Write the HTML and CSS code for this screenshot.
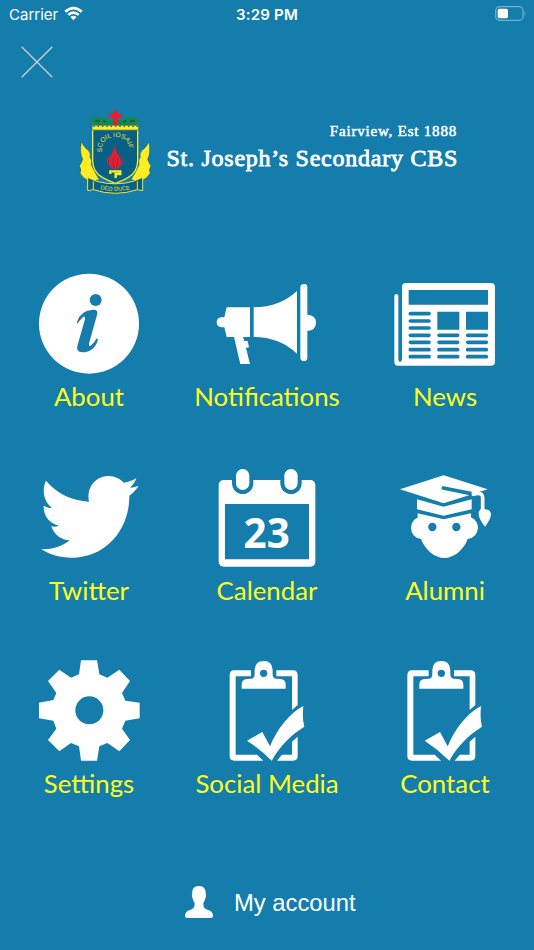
FILE: index.html
```html
<!DOCTYPE html>
<html lang="en">
<head>
  <meta charset="UTF-8">
  <meta name="viewport" content="width=device-width, initial-scale=1.0">
  <title>St. Joseph's Secondary CBS</title>
  <link rel="stylesheet" href="styles.css">
</head>
<body>
  <div class="status-bar">
    <div class="carrier">
      <span>Carrier</span>
      <svg class="wifi" viewBox="0 0 20 15">
        <path d="M.4 4.600Q10-3.800 19.600 4.600L17.700 6.600Q10-.2 2.300 6.600z"/>
        <path d="M3.600 7.900Q10 2.500 16.400 7.900L14.500 9.900Q10 6.300 5.500 9.900z"/>
        <path d="M6.800 11.100Q10 8.600 13.200 11.100L10 14.500z"/>
      </svg>
    </div>
    <span class="time">3:29 PM</span>
    <svg class="battery" viewBox="0 0 32 15">
      <rect class="battery-case" x=".7" y=".7" width="27.300" height="13.600" rx="3.800"/>
      <rect x="2.700" y="2.700" width="10.300" height="9.600" rx="1.800"/>
      <path class="battery-tip" d="M29.500 5Q31.500 7.500 29.500 10z"/>
    </svg>
  </div>

  <svg class="close" viewBox="0 0 32 32"><path d="M.7.700 31.300 31.300M31.300.700.700 31.300"/></svg>

  <header class="school">
    <svg class="crest" viewBox="0 0 270 285">
      <path class="green" d="M59 47Q66 36 78 39Q91 28 101 40Q113 36 119 48L134 42 149 48Q157 36 168 40Q180 28 190 39Q204 35 211 48L200 53 196 62H74L70 53z"/>
      <path class="leaf" d="M76 50l8-4 5 5M100 47l8 4M160 51l8-4M181 51l6-5 8 4"/>
      <path class="red" d="M130 17h13v10h13v11h-13v26h-13V38h-13V27h13z"/>
      <path class="gold" d="M34 110Q43 128 55 136Q64 147 60 157Q67 163 64 180Q74 202 88 224L61 230Q40 222 30 204Q36 195 28 183Q35 173 38 163Q28 143 34 110zM237 110Q228 128 216 136Q207 147 211 157Q204 163 207 180Q197 202 183 224L210 230Q231 222 241 204Q235 195 243 183Q236 173 233 163Q243 143 237 110z"/>
      <path class="shield" d="M68 74H203V166Q203 202 174 218Q150 231 136 235Q120 230 98 218Q68 202 68 166z"/>
      <path class="gold" d="M66 61H206V75H66z"/>
      <path class="battlement" d="M70 64H204"/>
      <path class="red" d="M135 116Q131 137 124 149Q112 163 118 182Q125 192 137 192Q154 187 155 173Q154 159 145 149Q135 138 135 116zM119 150Q110 169 115 182Q105 166 119 150zM152 150Q162 165 156 182Q166 166 152 150z"/>
      <path class="flame-line" d="M134 151Q125 171 132 189M142 159Q147 174 139 188"/>
      <path class="torch" d="M121 207V199H151V207H137V219"/>
      <path class="ribbon" d="M53 217L80 229Q136 244 190 229L218 217V257L202 254Q137 276 70 254L53 257zM70 229V254M202 229V254"/>
      <path id="motto-top" class="guide" d="M96 142Q91 98 137 96Q181 98 176 143"/>
      <text class="crest-text"><textPath href="#motto-top">SCOIL IOSAIF</textPath></text>
      <path id="motto-bottom" class="guide" d="M91 253Q137 262 184 253"/>
      <text class="crest-text motto"><textPath href="#motto-bottom">DEO DUCE</textPath></text>
    </svg>
    <div class="school-name">
      <p>Fairview, Est 1888</p>
      <h1>St. Joseph’s Secondary CBS</h1>
    </div>
  </header>

  <nav class="menu">
    <a class="item">
      <svg viewBox="27 27 300 300">
        <circle cx="177" cy="176" r="150"/>
        <circle class="cut" cx="197" cy="105" r="18"/>
        <path class="cut" d="M141 170Q152 138 185 135Q207 132 201 150L178 232Q174 248 184 241Q195 231 200 220L204 224Q193 261 157 262Q136 261 143 239L165 163Q167 149 157 158Q149 165 142 177z"/>
      </svg>
      <span>About</span>
    </a>
    <a class="item">
      <svg viewBox="81 27 300 300">
        <path d="M110 127H180V216H110L103 187H94Q80 186 80 172Q80 158 94 157H103z"/>
        <path d="M132 216H159L163 228H173L177 247 168 249 180 297H151z"/>
        <path d="M191 127Q268 127 321 78V266Q268 216 191 216z"/>
        <path d="M331 67Q332 57 342 57Q352 57 352 67V149Q378 151 378 173Q378 195 352 198V278Q352 288 342 288Q332 288 331 278z"/>
      </svg>
      <span>Notifications</span>
    </a>
    <a class="item">
      <svg viewBox="30 27 300 300">
        <path d="M28 92Q29 87 34 87Q39 87 40 92V284Q41 291 46 291Q50 290 51 282V66Q51 54 63 54H318Q330 54 330 66V290Q330 302 318 302H39Q28 302 28 290z"/>
        <path class="cut" d="M71 75H309V119H71zM157 140H223V194H157zM243 140H309V194H243z"/>
        <path class="cut-line" d="M76 146H132M76 168H132M76 189H132M76 211H132M76 232H132M76 254H132M76 275H132M162 211H218M162 232H218M162 254H218M162 275H218M248 211H304M248 232H304M248 254H304M248 275H304"/>
      </svg>
      <span>News</span>
    </a>
    <a class="item">
      <svg viewBox="27 24 300 300">
        <path d="M48 62C80 100 125 122 177 125C168 80 199 48 236 48C255 48 271 57 281 68C295 66 308 61 319 55C315 66 308 76 300 83C310 82 318 80 326 77C318 90 308 99 298 107C300 198 236 293 125 293C90 293 60 284 33 267C65 270 95 260 119 241C95 240 72 225 64 199C72 201 80 200 87 197C58 190 40 168 41 137C49 141 57 144 66 144C42 126 34 92 48 62z"/>
      </svg>
      <span>Twitter</span>
    </a>
    <a class="item">
      <svg viewBox="36 24 300 300">
        <rect x="41" y="60" width="290" height="260" rx="15"/>
        <path class="cut" d="M60 132H312V298H60z"/>
        <rect class="cut" x="81" y="24" width="64" height="78" rx="32"/>
        <rect class="cut" x="226" y="24" width="64" height="78" rx="32"/>
        <rect x="93" y="27" width="40" height="63" rx="20"/>
        <rect x="238" y="27" width="40" height="63" rx="20"/>
        <text class="day" x="185" y="265">23</text>
      </svg>
      <span>Calendar</span>
    </a>
    <a class="item">
      <svg viewBox="30 24 300 300">
        <path d="M45 88L176 46 308 88 176 130z"/>
        <path class="cord" d="M175 84L259 101"/>
        <path class="cut" d="M256 108L278 102Q286 103 286 113V120H256z"/>
        <path class="strand" d="M260 103L278 100Q293 99 293 114V151"/>
        <path d="M286 148H300Q318 149 318 165Q316 179 300 200Q285 182 281 165Q281 153 286 148z"/>
        <path d="M96 118L176 140 260 118V148L176 167 96 148z"/>
        <path d="M98 160L176 178 258 160V172Q279 182 279 203Q277 232 248 237C237 270 205 294 178 294C150 294 120 270 108 237Q79 232 78 203Q79 180 98 173z"/>
        <circle class="cut" cx="142" cy="201" r="12.500"/>
        <circle class="cut" cx="214" cy="201" r="12.500"/>
      </svg>
      <span>Alumni</span>
    </a>
    <a class="item">
      <svg viewBox="27 33 300 300">
        <path d="M153 31H201L208 73 232 83 268 59 300 93 276 129 286 152 329 158V205L286 212 276 236 300 270 268 304 232 279 208 289 201 332H153L147 289 123 279 88 304 54 270 79 236 70 212 27 205V158L70 150 79 129 54 93 88 59 123 83 147 73z"/>
        <circle class="cut" cx="178" cy="181" r="42"/>
      </svg>
      <span>Settings</span>
    </a>
    <a class="item">
      <svg viewBox="81 33 300 300">
        <g id="clipboard">
          <path d="M183 61H133Q119 61 119 75V318Q119 332 133 332H220L201 314H137V79H183zM259 61H309Q323 61 323 75V165L306 180V79H259zM323 260V318Q323 332 309 332H261L276 314H306V275z"/>
          <path d="M155 116V104Q155 88 171 87L184 86Q194 85 194 72V61Q195 33 221 33Q247 33 248 61V72Q248 85 258 86L271 87Q287 88 287 104V116z"/>
          <circle class="cut" cx="221" cy="70" r="11"/>
          <path d="M171 272L217 246 240 289C262 235 299 190 340 168C338 190 338 210 343 230C304 254 270 287 245 332Q211 298 171 272z"/>
        </g>
      </svg>
      <span>Social Media</span>
    </a>
    <a class="item">
      <svg viewBox="82 33 300 300"><use href="#clipboard"/></svg>
      <span>Contact</span>
    </a>
  </nav>

  <a class="account">
    <svg viewBox="44 32 85 97">
      <path d="M86 32C101 32 108 42 107 56Q110 60 106 69Q104 78 100 82V92Q101 100 110 103L120 107Q129 112 129 123Q129 129 122 129H51Q44 129 44 123Q44 112 53 107L63 103Q72 100 73 92V82Q69 78 67 69Q63 60 66 56C65 42 71 32 86 32z"/>
    </svg>
    <span>My account</span>
  </a>
</body>
</html>
```
FILE: styles.css
```css
* {
  margin: 0;
  padding: 0;
  box-sizing: border-box;
}

body {
  width: 534px;
  height: 950px;
  background: #147dab;
  color: #fff;
  font-family: Lato, sans-serif;
  overflow: hidden;
}

svg {
  display: block;
  fill: #fff;
  overflow: visible;
}

/* Status bar */
.status-bar {
  display: grid;
  grid-template-columns: 1fr auto 1fr;
  align-items: center;
  height: 28px;
  padding: 0 7px 0 9px;
  font-family: Inter, sans-serif;
  font-size: 15px;
}

.carrier {
  display: flex;
  align-items: center;
  gap: 6px;
}

.wifi {
  width: 19px;
  height: 15px;
  margin-top: -2px;
}

.time {
  margin-right: 2px;
  font-weight: 600;
  letter-spacing: 0.2px;
}

.battery {
  width: 32px;
  height: 15px;
  margin-top: -1px;
  justify-self: end;
}

.battery-case {
  fill: none;
  stroke: #73b1cd;
  stroke-width: 1.2;
}

.battery-tip {
  fill: #73b1cd;
}

.close {
  width: 32px;
  height: 32px;
  margin: 18px 0 0 21px;
  stroke: #c5cdd0;
  stroke-width: 1.4;
}

/* School logo */
.school {
  display: flex;
  height: 95px;
  margin: 27px 0 0 70px;
}

.crest {
  width: 90px;
  height: 95px;
}

.green {
  fill: #168653;
}

.leaf {
  fill: none;
  stroke: #0b533c;
  stroke-width: 4;
}

.red {
  fill: #ec1c2e;
}

.gold {
  fill: #ffed24;
  stroke: #075376;
  stroke-width: 1.5;
}

.shield,
.ribbon {
  fill: #096087;
  stroke: #f3e833;
  stroke-width: 4;
}

.ribbon {
  stroke-width: 3;
}

.battlement {
  fill: none;
  stroke: #344c3d;
  stroke-width: 4;
  stroke-dasharray: 4 9;
}

.flame-line {
  fill: none;
  stroke: #5c304d;
  stroke-width: 2;
}

.torch {
  fill: none;
  stroke: #ffed24;
  stroke-width: 7;
}

.guide {
  fill: none;
}

.crest-text {
  fill: #e9e33b;
  font-family: "Liberation Sans", sans-serif;
  font-size: 20px;
}

.motto {
  font-size: 17px;
}

.school-name {
  width: 298px;
  padding-top: 17px;
  text-align: right;
  font-family: "Liberation Serif", serif;
  white-space: nowrap;
}

.school-name p {
  padding-right: 1px;
  font-size: 15px;
  line-height: 18px;
  letter-spacing: 0.8px;
  -webkit-text-stroke: 0.5px #fff;
}

.school-name h1 {
  font-size: 24px;
  font-weight: normal;
  line-height: 28px;
  margin-top: 4px;
  letter-spacing: 0.75px;
  -webkit-text-stroke: 0.8px #fff;
}

/* Menu */
.menu {
  display: grid;
  grid-template-columns: repeat(3, 178px);
  grid-auto-rows: 193.5px;
  margin-top: 74px;
}

.item {
  display: flex;
  flex-direction: column;
  align-items: center;
}

.item svg {
  width: 100px;
  height: 100px;
}

.item span {
  margin-top: 6px;
  color: #ffff1f;
  font-size: 25.8px;
  line-height: 32px;
}

.item .cut {
  fill: #147dab;
}

.cut-line,
.cord {
  fill: none;
  stroke: #147dab;
  stroke-width: 11;
  stroke-linecap: round;
}

.strand {
  fill: none;
  stroke: #fff;
  stroke-width: 11;
}

.day {
  font-family: "Open Sans", sans-serif;
  font-size: 121px;
  font-weight: bold;
  text-anchor: middle;
}

/* My account */
.account {
  display: flex;
  align-items: center;
  gap: 21px;
  margin: 31px 0 0 185px;
  font-family: "Liberation Sans", sans-serif;
  font-size: 23.8px;
}

.account svg {
  width: 28px;
  height: 32px;
}

.account span {
  padding-top: 2px;
}
```
